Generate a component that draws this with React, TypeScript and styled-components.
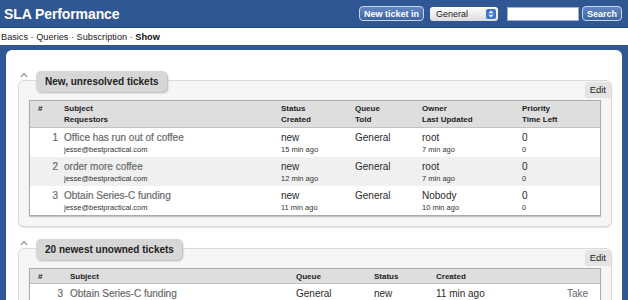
import styled, { createGlobalStyle } from "styled-components";

const GlobalStyle = createGlobalStyle`
  html, body {
    margin: 0;
    padding: 0;
    background: #2f5794;
  }
  body {
    font-family: "Liberation Sans", Arial, sans-serif;
    width: 628px;
    height: 300px;
    overflow: hidden;
  }
`;

const Page = styled.div`
  display: flex;
  flex-direction: column;
  height: 300px;
  overflow: hidden;
`;

const Header = styled.div`
  flex: none;
  height: 28px;
  display: flex;
  align-items: center;
  padding: 0 6px 0 4px;
  box-sizing: border-box;
  border-bottom: 1px solid #24487f;
`;

const Title = styled.h1`
  margin: 0;
  flex: 1;
  font-size: 14px;
  font-weight: bold;
  color: #fff;
  letter-spacing: -0.1px;
`;

const Controls = styled.div`
  display: flex;
  align-items: center;
`;

const HeadButton = styled.button<{ $gap?: number }>`
  height: 15px;
  margin-left: ${(p) => p.$gap ?? 0}px;
  padding: 0 4px;
  border: 1px solid #c9d5ea;
  border-radius: 4px;
  background: linear-gradient(#6486c0, #3e64a6);
  color: #fff;
  font-family: inherit;
  font-size: 9px;
  font-weight: bold;
  line-height: 12px;
`;

const Select = styled.div`
  width: 68px;
  height: 14px;
  margin-left: 6px;
  box-sizing: border-box;
  display: flex;
  align-items: center;
  padding: 0 2px 0 6px;
  border-radius: 3px;
  background: linear-gradient(#ffffff, #dcdcdc);
  font-size: 9px;
  color: #222;
`;

const SelectLabel = styled.span`
  flex: 1;
`;

const Stepper = styled.span`
  width: 10px;
  height: 10px;
  border-radius: 2px;
  background: #3f74cf;
  display: flex;
  align-items: center;
  justify-content: center;
`;

const SearchInput = styled.div`
  width: 72px;
  height: 14px;
  margin-left: 9px;
  background: #fff;
  border: 1px solid #9fb2d3;
  box-sizing: border-box;
`;

const Nav = styled.div`
  flex: none;
  height: 17px;
  background: #fff;
  display: flex;
  align-items: center;
  padding-left: 1px;
  font-size: 9.2px;
  color: #222;
  white-space: pre;
`;

const NavCurrent = styled.b`
  color: #111;
`;

const Content = styled.div`
  flex: 1;
  min-height: 0;
  margin: 5px 6px 0 6px;
  background: #fff;
  border-radius: 6px 6px 0 0;
  padding: 21px 10px 0 12px;
`;

const Section = styled.section<{ $gapTop?: number }>`
  margin-top: ${(p) => p.$gapTop ?? 0}px;
`;

const SectionHead = styled.div`
  display: flex;
  align-items: flex-start;
  height: 21px;
  position: relative;
  z-index: 1;
`;

const Caret = styled.svg`
  margin: 1px 0 0 2px;
  width: 8px;
  height: 6px;
`;

const Tab = styled.div`
  margin-left: 8px;
  height: 21px;
  display: flex;
  align-items: center;
  padding: 0 8px 0 9px;
  background: #d7d7d7;
  border-radius: 5px;
  box-shadow: 1px 1px 2px #b3b3b3;
  font-size: 10px;
  font-weight: bold;
  color: #222;
`;

const Panel = styled.div`
  margin-top: -12px;
  background: #f6f6f6;
  border: 1px solid #dadada;
  border-radius: 6px;
  padding: 1px 10px 10px 10px;
  box-shadow: 0 1px 1px #e2e2e2;
`;

const EditRow = styled.div`
  display: flex;
  justify-content: flex-end;
  margin: 0 -10px 2px 0;
`;

const Edit = styled.span`
  height: 16px;
  line-height: 16px;
  padding: 0 5px;
  background: #e4e4e4;
  border-radius: 4px 0 0 0;
  font-size: 9.5px;
  color: #222;
`;

const Table = styled.div`
  background: #fff;
  border: 1px solid #acacac;
  box-shadow: 0 1px 1px #c4c4c4;
`;

const Row = styled.div<{ $cols: string; $head?: boolean; $alt?: boolean; $h: number }>`
  display: grid;
  grid-template-columns: ${(p) => p.$cols};
  height: ${(p) => p.$h}px;
  box-sizing: border-box;
  padding-top: ${(p) => (p.$head ? 2 : 3)}px;
  background: ${(p) => (p.$head ? "#dedede" : p.$alt ? "#f0f0f0" : "#fff")};
  border-bottom: ${(p) => (p.$head ? "1px solid #c2c2c2" : "none")};
`;

const Cell = styled.div<{ $right?: boolean; $pad?: number }>`
  display: flex;
  flex-direction: column;
  align-items: ${(p) => (p.$right ? "flex-end" : "flex-start")};
  padding: ${(p) => (p.$right ? `0 ${p.$pad ?? 0}px 0 0` : `0 0 0 ${p.$pad ?? 0}px`)};
`;

const HeadText = styled.span`
  font-size: 8px;
  font-weight: bold;
  line-height: 11px;
  color: #222;
`;

const Main = styled.span<{ $link?: boolean }>`
  font-size: 10px;
  line-height: 13px;
  color: ${(p) => (p.$link ? "#6a6a6a" : "#2a2a2a")};
  -webkit-text-stroke: ${(p) => (p.$link ? "0.2px #6a6a6a" : "0")};
`;

const Sub = styled.span`
  font-size: 7.5px;
  line-height: 12px;
  color: #333;
`;

const TakeLink = styled.span`
  font-size: 10px;
  line-height: 13px;
  color: #666;
`;

const upCaret = (
  <Caret viewBox="0 0 8 6">
    <polyline points="1,5 4,1.5 7,5" fill="none" stroke="#9a9a9a" strokeWidth="1.2" />
  </Caret>
);

type Ticket = {
  id: number;
  subject: string;
  requestor: string;
  status: string;
  created: string;
  queue: string;
  owner: string;
  updated: string;
};

const tickets: Ticket[] = [
  { id: 1, subject: "Office has run out of coffee", requestor: "jesse@bestpractical.com", status: "new", created: "15 min ago", queue: "General", owner: "root", updated: "7 min ago" },
  { id: 2, subject: "order more coffee", requestor: "jesse@bestpractical.com", status: "new", created: "12 min ago", queue: "General", owner: "root", updated: "7 min ago" },
  { id: 3, subject: "Obtain Series-C funding", requestor: "jesse@bestpractical.com", status: "new", created: "11 min ago", queue: "General", owner: "Nobody", updated: "10 min ago" },
];

const COLS_A = "34px 217px 74px 67px 100px 1fr";
const COLS_B = "40px 226px 78px 62px 1fr auto";

const App = () => {
  return (
    <Page>
      <GlobalStyle />
      <Header>
        <Title>SLA Performance</Title>
        <Controls>
          <HeadButton>New ticket in</HeadButton>
          <Select>
            <SelectLabel>General</SelectLabel>
            <Stepper>
              <svg width="6" height="8" viewBox="0 0 6 8">
                <polygon points="0.5,3.3 3,0.6 5.5,3.3" fill="#fff" />
                <polygon points="0.5,4.7 3,7.4 5.5,4.7" fill="#fff" />
              </svg>
            </Stepper>
          </Select>
          <SearchInput />
          <HeadButton $gap={3}>Search</HeadButton>
        </Controls>
      </Header>
      <Nav>
        {"Basics · Queries · Subscription · "}
        <NavCurrent>Show</NavCurrent>
      </Nav>
      <Content>
        <Section>
          <SectionHead>
            {upCaret}
            <Tab>New, unresolved tickets</Tab>
          </SectionHead>
          <Panel>
            <EditRow>
              <Edit>Edit</Edit>
            </EditRow>
            <Table>
              <Row $cols={COLS_A} $head $h={27}>
                <Cell $pad={8}><HeadText>#</HeadText></Cell>
                <Cell><HeadText>Subject</HeadText><HeadText>Requestors</HeadText></Cell>
                <Cell><HeadText>Status</HeadText><HeadText>Created</HeadText></Cell>
                <Cell><HeadText>Queue</HeadText><HeadText>Told</HeadText></Cell>
                <Cell><HeadText>Owner</HeadText><HeadText>Last Updated</HeadText></Cell>
                <Cell><HeadText>Priority</HeadText><HeadText>Time Left</HeadText></Cell>
              </Row>
              {tickets.map((t, i) => (
                <Row key={t.id} $cols={COLS_A} $alt={i % 2 === 1} $h={29}>
                  <Cell $right $pad={6}><Main $link>{t.id}</Main></Cell>
                  <Cell><Main $link>{t.subject}</Main><Sub>{t.requestor}</Sub></Cell>
                  <Cell><Main>{t.status}</Main><Sub>{t.created}</Sub></Cell>
                  <Cell><Main>{t.queue}</Main></Cell>
                  <Cell><Main>{t.owner}</Main><Sub>{t.updated}</Sub></Cell>
                  <Cell><Main>0</Main><Sub>0</Sub></Cell>
                </Row>
              ))}
            </Table>
          </Panel>
        </Section>
        <Section $gapTop={12}>
          <SectionHead>
            {upCaret}
            <Tab>20 newest unowned tickets</Tab>
          </SectionHead>
          <Panel>
            <EditRow>
              <Edit>Edit</Edit>
            </EditRow>
            <Table>
              <Row $cols={COLS_B} $head $h={15}>
                <Cell $pad={8}><HeadText>#</HeadText></Cell>
                <Cell><HeadText>Subject</HeadText></Cell>
                <Cell><HeadText>Queue</HeadText></Cell>
                <Cell><HeadText>Status</HeadText></Cell>
                <Cell><HeadText>Created</HeadText></Cell>
                <Cell />
              </Row>
              <Row $cols={COLS_B} $h={20}>
                <Cell $right $pad={7}><Main $link>3</Main></Cell>
                <Cell><Main $link>Obtain Series-C funding</Main></Cell>
                <Cell><Main>General</Main></Cell>
                <Cell><Main>new</Main></Cell>
                <Cell><Main>11 min ago</Main></Cell>
                <Cell $right $pad={12}><TakeLink>Take</TakeLink></Cell>
              </Row>
            </Table>
          </Panel>
        </Section>
      </Content>
    </Page>
  );
};

export default App;
